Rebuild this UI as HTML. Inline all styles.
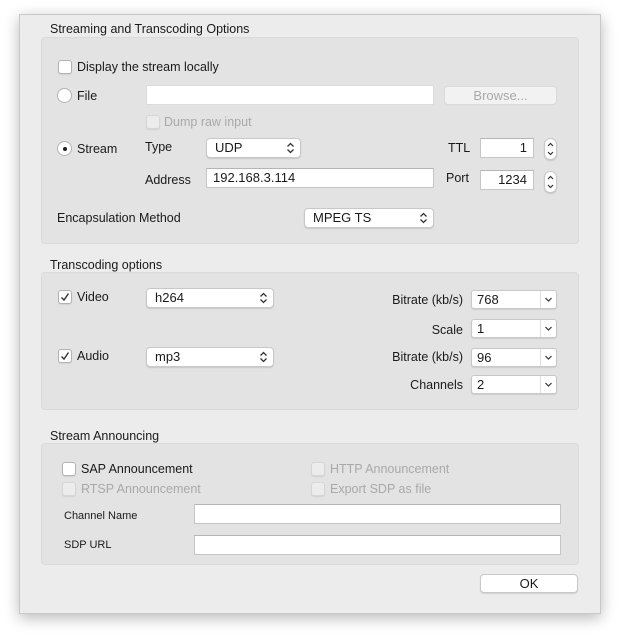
<!DOCTYPE html>
<html><head><style>
*{box-sizing:border-box;margin:0;padding:0}
body{width:620px;height:638px;background:#fff;position:relative;font-family:"Liberation Sans",Arial,sans-serif;font-size:12.5px;color:#1a1a1a;overflow:hidden}
.win{position:absolute;left:19px;top:14px;width:582px;height:600px;background:#ececec;border:1px solid #c8c8c8;box-shadow:0 4px 14px rgba(0,0,0,.28)}
.a{position:absolute}
.panel{position:absolute;background:#e3e3e3;border:1px solid #dadada;border-radius:4px}
.t{position:absolute;white-space:nowrap;line-height:14px}
.dis{color:#a9a9a9}
.cb{position:absolute;width:14px;height:14px;background:#fff;border:1px solid #b3b3b3;border-radius:3px;box-shadow:0 1px 1px rgba(0,0,0,.08)}
.cb.d{background:#ececec;border-color:#d6d6d6}
.rd{position:absolute;width:15px;height:15px;background:#fff;border:1px solid #b3b3b3;border-radius:50%}
.tf{position:absolute;background:#fff;border:1px solid #c5c5c5;border-top-color:#b5b5b5;padding:0 6px;line-height:17px;font-size:13px}
.sel{position:absolute;background:#fff;border:1px solid #c8c8c8;border-radius:4px;box-shadow:0 1px 1px rgba(0,0,0,.12);padding-left:8px;font-size:13px;line-height:17px}
.sel svg{position:absolute;right:5px;top:3px}
.combo{position:absolute;background:#fff;border:1px solid #c8c8c8;border-radius:3px;box-shadow:0 1px 1px rgba(0,0,0,.1);padding-left:5px;font-size:13px;line-height:17px}
.combo .dd{position:absolute;right:0;top:0;bottom:0;width:16px;border-left:1px solid #e0e0e0}
.step{position:absolute;width:13px;height:22px;background:#fff;border:1px solid #c8c8c8;border-radius:6px;box-shadow:0 1px 1px rgba(0,0,0,.12)}
.btn{position:absolute;background:#fff;border:1px solid #c8c8c8;border-radius:4px;box-shadow:0 1px 1px rgba(0,0,0,.12);text-align:center;font-size:13px;line-height:17px}
</style></head><body>
<div class="win"></div>

<div class="t" style="left:50px;top:22px">Streaming and Transcoding Options</div>
<div class="panel" style="left:41px;top:37px;width:538px;height:207px"></div>

<div class="cb" style="left:58px;top:60px"></div>
<div class="t" style="left:77px;top:60px">Display the stream locally</div>

<div class="rd" style="left:57px;top:88px"></div>
<div class="t" style="left:77px;top:89px">File</div>
<div class="tf" style="left:146px;top:85px;width:288px;height:20px;border-color:#dcdcdc"></div>
<div class="btn dis" style="left:444px;top:86px;width:113px;height:19px;background:#f2f2f2;border-color:#dadada;box-shadow:none;color:#a9a9a9">Browse...</div>

<div class="cb d" style="left:146px;top:115px"></div>
<div class="t dis" style="left:164px;top:115px">Dump raw input</div>

<div class="rd" style="left:57px;top:141px"><div class="a" style="left:5px;top:5px;width:4px;height:4px;border-radius:50%;background:#222"></div></div>
<div class="t" style="left:77px;top:142px">Stream</div>
<div class="t" style="left:145px;top:140px">Type</div>
<div class="sel" style="left:206px;top:138px;width:95px;height:20px">UDP<svg width="9" height="12" viewBox="0 0 9 12"><path d="M1.5 4.5L4.5 1.5L7.5 4.5M1.5 7.5L4.5 10.5L7.5 7.5" fill="none" stroke="#333" stroke-width="1.3"/></svg></div>
<div class="t" style="left:448px;top:141px">TTL</div>
<div class="tf" style="left:480px;top:138px;width:54px;height:20px;text-align:right">1</div>
<div class="step" style="left:544px;top:138px"><svg width="11" height="20" viewBox="0 0 11 20" style="position:absolute;left:0;top:0"><path d="M3 7L5.5 4.5L8 7M3 13L5.5 15.5L8 13" fill="none" stroke="#333" stroke-width="1.2"/></svg></div>

<div class="t" style="left:145px;top:173px">Address</div>
<div class="tf" style="left:206px;top:168px;width:228px;height:20px">192.168.3.114</div>
<div class="t" style="left:446px;top:171px">Port</div>
<div class="tf" style="left:480px;top:170px;width:54px;height:20px;text-align:right">1234</div>
<div class="step" style="left:544px;top:171px"><svg width="11" height="20" viewBox="0 0 11 20" style="position:absolute;left:0;top:0"><path d="M3 7L5.5 4.5L8 7M3 13L5.5 15.5L8 13" fill="none" stroke="#333" stroke-width="1.2"/></svg></div>

<div class="t" style="left:57px;top:211px">Encapsulation Method</div>
<div class="sel" style="left:304px;top:208px;width:130px;height:20px">MPEG TS<svg width="9" height="12" viewBox="0 0 9 12"><path d="M1.5 4.5L4.5 1.5L7.5 4.5M1.5 7.5L4.5 10.5L7.5 7.5" fill="none" stroke="#333" stroke-width="1.3"/></svg></div>

<div class="t" style="left:50px;top:258px">Transcoding options</div>
<div class="panel" style="left:41px;top:272px;width:538px;height:138px"></div>

<div class="cb" style="left:58px;top:290px"><svg width="12" height="12" viewBox="0 0 12 12" style="position:absolute;left:0;top:0"><path d="M2.5 6.5L5 9L9.5 2.5" fill="none" stroke="#333" stroke-width="1.4"/></svg></div>
<div class="t" style="left:77px;top:290px">Video</div>
<div class="sel" style="left:146px;top:288px;width:128px;height:20px">h264<svg width="9" height="12" viewBox="0 0 9 12"><path d="M1.5 4.5L4.5 1.5L7.5 4.5M1.5 7.5L4.5 10.5L7.5 7.5" fill="none" stroke="#333" stroke-width="1.3"/></svg></div>

<div class="t" style="left:363px;top:293px;width:100px;text-align:right">Bitrate (kb/s)</div>
<div class="combo" style="left:471px;top:290px;width:86px;height:19px">768<div class="dd"><svg width="15" height="17" viewBox="0 0 15 17"><path d="M4.5 7L7.5 10L10.5 7" fill="none" stroke="#333" stroke-width="1.2"/></svg></div></div>
<div class="t" style="left:363px;top:323px;width:100px;text-align:right">Scale</div>
<div class="combo" style="left:471px;top:319px;width:86px;height:19px">1<div class="dd"><svg width="15" height="17" viewBox="0 0 15 17"><path d="M4.5 7L7.5 10L10.5 7" fill="none" stroke="#333" stroke-width="1.2"/></svg></div></div>

<div class="cb" style="left:58px;top:349px"><svg width="12" height="12" viewBox="0 0 12 12" style="position:absolute;left:0;top:0"><path d="M2.5 6.5L5 9L9.5 2.5" fill="none" stroke="#333" stroke-width="1.4"/></svg></div>
<div class="t" style="left:77px;top:349px">Audio</div>
<div class="sel" style="left:146px;top:347px;width:128px;height:20px">mp3<svg width="9" height="12" viewBox="0 0 9 12"><path d="M1.5 4.5L4.5 1.5L7.5 4.5M1.5 7.5L4.5 10.5L7.5 7.5" fill="none" stroke="#333" stroke-width="1.3"/></svg></div>

<div class="t" style="left:363px;top:350px;width:100px;text-align:right">Bitrate (kb/s)</div>
<div class="combo" style="left:471px;top:348px;width:86px;height:19px">96<div class="dd"><svg width="15" height="17" viewBox="0 0 15 17"><path d="M4.5 7L7.5 10L10.5 7" fill="none" stroke="#333" stroke-width="1.2"/></svg></div></div>
<div class="t" style="left:363px;top:378px;width:100px;text-align:right">Channels</div>
<div class="combo" style="left:471px;top:375px;width:86px;height:19px">2<div class="dd"><svg width="15" height="17" viewBox="0 0 15 17"><path d="M4.5 7L7.5 10L10.5 7" fill="none" stroke="#333" stroke-width="1.2"/></svg></div></div>

<div class="t" style="left:50px;top:429px">Stream Announcing</div>
<div class="panel" style="left:41px;top:443px;width:538px;height:122px"></div>

<div class="cb" style="left:62px;top:462px"></div>
<div class="t" style="left:81px;top:462px">SAP Announcement</div>
<div class="cb d" style="left:311px;top:462px"></div>
<div class="t dis" style="left:330px;top:462px">HTTP Announcement</div>
<div class="cb d" style="left:62px;top:482px"></div>
<div class="t dis" style="left:81px;top:482px">RTSP Announcement</div>
<div class="cb d" style="left:311px;top:482px"></div>
<div class="t dis" style="left:330px;top:482px">Export SDP as file</div>

<div class="t" style="left:64px;top:509px;font-size:11px">Channel Name</div>
<div class="tf" style="left:194px;top:504px;width:367px;height:20px"></div>
<div class="t" style="left:64px;top:538px;font-size:11px">SDP URL</div>
<div class="tf" style="left:194px;top:535px;width:367px;height:20px"></div>

<div class="btn" style="left:480px;top:574px;width:98px;height:19px">OK</div>
</body></html>
